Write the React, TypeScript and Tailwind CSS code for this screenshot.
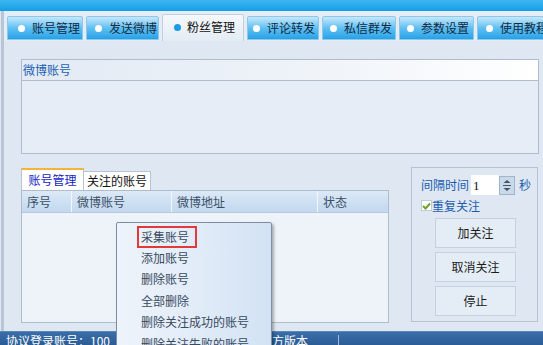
import React from 'react';

const topTabs = [
  { label: '账号管理', w: 'w-[76px]', pl: 'pl-[10px]' },
  { label: '发送微博', w: 'w-[73px]', pl: 'pl-[8px]' },
  { label: '粉丝管理', w: 'w-[82px]', pl: 'pl-[11px]', active: true },
  { label: '评论转发', w: 'w-[72px]', pl: 'pl-[5px]' },
  { label: '私信群发', w: 'w-[74px]', pl: 'pl-[7px]' },
  { label: '参数设置', w: 'w-[75px]', pl: 'pl-[7px]' },
  { label: '使用教程', w: 'w-[80px]', pl: 'pl-[8px]' },
];

const menuItems = ['采集账号', '添加账号', '删除账号', '全部删除', '删除关注成功的账号', '删除关注失败的账号'];

export default function App() {
  return (
    <div className="relative w-[543px] h-[345px] overflow-hidden bg-[#dfe8f2] text-[12px] leading-none whitespace-nowrap text-[#1b2a3a] flex flex-col [font-family:'Noto_Sans_CJK_SC','Liberation_Sans',sans-serif]">
      {/* title strip */}
      <div className="h-[11px] shrink-0 bg-gradient-to-b from-[#3cb6f2] to-[#129ee6]" />

      <div className="flex-1 flex flex-col border-l-[3px] border-[#b9c6d4] ml-[1px] bg-[#dfe8f2]">
        {/* top tabs */}
        <div className="h-[30px] shrink-0 flex items-end gap-[3px] pl-[3px] bg-[#e4ecf5]">
          {topTabs.map((t) =>
            t.active ? (
              <div
                key={t.label}
                className={`${t.w} ${t.pl} h-[27px] shrink-0 flex items-center gap-[6px] pb-[2px] bg-gradient-to-b from-[#f4f8fc] to-[#e3ebf4] border border-b-0 border-[#c2cfdd] rounded-t-[2px] text-[#111]`}
              >
                <span className="w-[7px] h-[7px] shrink-0 rounded-full bg-[#1a9be6]" />
                {t.label}
              </div>
            ) : (
              <div
                key={t.label}
                className={`${t.w} ${t.pl} h-[24px] mb-[1px] shrink-0 flex items-center gap-[7px] bg-gradient-to-b from-[#c4e8fb] via-[#5ec0f2] to-[#22a2e8] border border-[#8fc7ea] rounded-t-[2px] text-[#142a44]`}
              >
                <span className="w-[7px] h-[7px] shrink-0 rounded-full bg-white" />
                {t.label}
              </div>
            )
          )}
        </div>

        <div className="flex-1 flex flex-col pl-[17px] pr-[4px] pt-[18px]">
          {/* 微博账号 group */}
          <div className="h-[95px] w-[518px] shrink-0 border border-[#aebccb] bg-[#e6edf6] flex flex-col">
            <div className="h-[21px] shrink-0 flex items-center pl-[1px] border-b border-[#aebccb] bg-gradient-to-r from-[#e3eaf4] via-[#edf2f8] to-[#ffffff] text-[#1a5fb4]">
              微博账号
            </div>
            <div className="flex-1" />
          </div>

          <div className="flex mt-[14px]">
            {/* left: tabs + table */}
            <div className="w-[368px] flex flex-col">
              <div className="h-[22px] flex items-end">
                <div className="w-[63px] h-[22px] flex items-center justify-center border border-b-0 border-[#b7c4d2] border-t-[2px] border-t-[#f5b53a] bg-white text-[#1424c4]">
                  账号管理
                </div>
                <div className="w-[67px] h-[19px] flex items-center justify-center border border-b-0 border-l-0 border-[#b7c4d2] bg-white text-[#111]">
                  关注的账号
                </div>
              </div>
              <div className="h-[133px] border border-[#aebccb] bg-[#eef3f9] flex flex-col">
                <div className="h-[22px] flex bg-gradient-to-b from-[#dce9f7] to-[#c2d8ef] border-b border-[#b5c9de] text-[#3a4f66]">
                  <div className="w-[50px] flex items-center pl-[5px] border-r border-[#f4f8fc]">序号</div>
                  <div className="w-[100px] flex items-center pl-[5px] border-r border-[#f4f8fc]">微博账号</div>
                  <div className="w-[146px] flex items-center pl-[5px] border-r border-[#f4f8fc]">微博地址</div>
                  <div className="flex-1 flex items-center pl-[5px]">状态</div>
                </div>
                <div className="flex-1" />
              </div>
            </div>

            {/* right: controls group */}
            <div className="ml-[22px] mt-[-1px] w-[127px] h-[155px] border border-[#b5c2d0] flex flex-col pl-[9px]">
              <div className="flex items-center mt-[7px] h-[20px]">
                <span className="text-[#1c5cb0]">间隔时间</span>
                <div className="ml-[2px] w-[28px] h-[20px] bg-white flex items-center pl-[2px] text-[#111] [font-family:'Liberation_Serif',serif] text-[13px]">1</div>
                <div className="w-[16px] h-[19px] bg-[#c9d9ea] border border-[#9fb5cc] flex items-center justify-center">
                  <svg width="10" height="13" viewBox="0 0 10 13">
                    <path d="M5 1 L8.5 4 L1.5 4 Z" fill="#41566e" />
                    <path d="M1 6.5 L9 6.5" stroke="#41566e" strokeWidth="1" />
                    <path d="M1.5 9 L8.5 9 L5 12 Z" fill="#41566e" />
                  </svg>
                </div>
                <span className="ml-[4px] text-[#1c5cb0]">秒</span>
              </div>
              <div className="flex items-center mt-[4px] h-[13px]">
                <span className="w-[11px] h-[11px] bg-white border border-[#c0ccd8] flex items-center justify-center">
                  <svg width="9" height="8" viewBox="0 0 9 8">
                    <path d="M1 4 L3.5 6.5 L8 1.5" fill="none" stroke="#6aa326" strokeWidth="2" />
                  </svg>
                </span>
                <span className="text-[#1c5cb0]">重复关注</span>
              </div>
              <div className="flex flex-col gap-[4px] mt-[6px] ml-[14px] w-[81px]">
                {['加关注', '取消关注', '停止'].map((b) => (
                  <div key={b} className="h-[30px] flex items-center justify-center bg-[#e4ecf5] border border-[#c4d1df] text-[#1b1b1b]">
                    {b}
                  </div>
                ))}
              </div>
            </div>
          </div>
        </div>
      </div>

      {/* status bar */}
      <div className="h-[14px] shrink-0 flex items-start pt-[3px] bg-gradient-to-b from-[#3a6ea8] to-[#2b5c95] text-white border-t border-[#5b86b8]">
        <span className="pl-[6px]">协议登录账号：100</span>
        <span className="ml-[150px]">入方版本</span>
        <span className="ml-[30px] w-px h-[12px] bg-[#9fb8d6]" />
      </div>

      {/* context menu */}
      <div className="absolute left-[116px] top-[222px] w-[156px] h-[135px] border border-[#7c8ea3] rounded-[2px] bg-gradient-to-r from-[#eef4fb] via-[#e2ecf8] to-[#d2e2f4] shadow-[2px_2px_3px_rgba(0,0,0,0.3)] flex flex-col pt-[3px] pl-[24px] text-[#394a5f]">
        {menuItems.map((m, i) => (
          <div key={m} className="h-[21.4px] shrink-0 flex items-center">
            {i === 0 ? (
              <span className="-ml-[4px] w-[60px] h-[22px] border-2 border-[#e23a3a] flex items-center pl-[2px]">{m}</span>
            ) : (
              <span>{m}</span>
            )}
          </div>
        ))}
      </div>
    </div>
  );
}
